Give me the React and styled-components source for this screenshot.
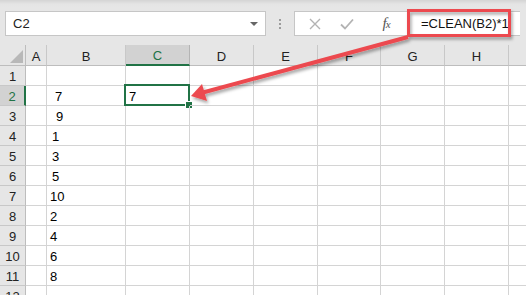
import React from "react";
import styled, { createGlobalStyle } from "styled-components";

const GREEN = "#217346";
const GRID = "#d4d4d4";
const columns = ["A", "B", "C", "D", "E", "F", "G", "H", "I"];
const widths = [21, 79, 64, 64, 64, 63, 64, 64, 64];
const values = [
  { v: "", indent: 0 },
  { v: "7", indent: 5 },
  { v: "9", indent: 6 },
  { v: "1", indent: 2 },
  { v: "3", indent: 2 },
  { v: "5", indent: 2 },
  { v: "10", indent: 0 },
  { v: "2", indent: 0 },
  { v: "4", indent: 0 },
  { v: "6", indent: 0 },
  { v: "8", indent: 0 },
  { v: "", indent: 0 },
];

const GlobalStyle = createGlobalStyle`
  body {
    margin: 0;
    background: #fff;
  }
`;

const Window = styled.div`
  position: relative;
  width: 526px;
  height: 295px;
  overflow: hidden;
  font-family: "Liberation Sans", Arial, sans-serif;
  color: #000;
`;

const TopBar = styled.div`
  height: 45px;
  box-sizing: border-box;
  display: flex;
  align-items: flex-start;
  padding: 11px 0 0 5px;
  background: linear-gradient(#d4d4d4 0px, #e4e4e4 4px, #e6e6e6 8px);
`;

const NameBox = styled.div`
  width: 261px;
  height: 25px;
  box-sizing: border-box;
  display: flex;
  align-items: center;
  justify-content: space-between;
  padding: 0 7px 0 7px;
  background: #fff;
  border: 1px solid #c6c6c6;
  font-size: 13px;
  color: #222;
`;

const Caret = styled.span`
  width: 0;
  height: 0;
  border-left: 4px solid transparent;
  border-right: 4px solid transparent;
  border-top: 4px solid #666;
`;

const Grip = styled.div`
  width: 28px;
  height: 25px;
  display: flex;
  flex-direction: column;
  align-items: center;
  justify-content: center;
  gap: 2px;
  & > span {
    width: 2px;
    height: 2px;
    background: #9c9c9c;
  }
`;

const FormulaArea = styled.div`
  width: 226px;
  height: 25px;
  box-sizing: border-box;
  display: flex;
  align-items: center;
  padding-left: 4px;
  background: #fff;
  border: 1px solid #c6c6c6;
  border-right: none;
`;

const Btn = styled.div`
  width: ${(p) => p.w}px;
  height: 100%;
  display: flex;
  align-items: center;
  justify-content: center;
`;

const Fx = styled.span`
  font-family: "Liberation Serif", "Times New Roman", serif;
  font-style: italic;
  font-size: 15px;
  color: #555;
  letter-spacing: -1px;
  & > small {
    font-size: 11px;
  }
`;

const FormulaText = styled.div`
  padding-left: 12px;
  font-size: 13px;
  color: #111;
`;

const Sheet = styled.div`
  display: grid;
  grid-template-columns: 26px ${widths.map((w) => `${w}px`).join(" ")};
  grid-auto-rows: 20px;
  grid-template-rows: 21px;
  width: max-content;
`;

const Corner = styled.div`
  position: relative;
  background: #e6e6e6;
  border-right: 1px solid #bdbdbd;
  border-bottom: 1px solid #bdbdbd;
  box-sizing: border-box;
  &::after {
    content: "";
    position: absolute;
    right: 2px;
    bottom: 2px;
    width: 0;
    height: 0;
    border-left: 13px solid transparent;
    border-bottom: 13px solid #b8b8b8;
  }
`;

const ColHeader = styled.div`
  box-sizing: border-box;
  display: flex;
  align-items: center;
  justify-content: center;
  padding-top: 2px;
  font-size: 13px;
  background: ${(p) => (p.selected ? "#d2d2d2" : "#e6e6e6")};
  color: ${(p) => (p.selected ? GREEN : "#222")};
  border-right: 1px solid ${(p) => (p.selected ? "#b4b4b4" : "#c8c8c8")};
  border-bottom: ${(p) => (p.selected ? `2px solid ${GREEN}` : "1px solid #bdbdbd")};
`;

const RowHeader = styled.div`
  box-sizing: border-box;
  display: flex;
  align-items: center;
  justify-content: center;
  padding-top: 2px;
  font-size: 13px;
  background: ${(p) => (p.selected ? "#d2d2d2" : "#e6e6e6")};
  color: ${(p) => (p.selected ? GREEN : "#222")};
  border-right: ${(p) => (p.selected ? `2px solid ${GREEN}` : "1px solid #bdbdbd")};
  border-bottom: 1px solid #c8c8c8;
`;

const Cell = styled.div`
  position: relative;
  box-sizing: border-box;
  display: flex;
  align-items: flex-end;
  padding-left: ${(p) => 3 + (p.indent || 0)}px;
  font-size: 13px;
  line-height: 16px;
  white-space: nowrap;
  border-right: 1px solid ${GRID};
  border-bottom: 1px solid ${GRID};
`;

const Selection = styled.div`
  position: absolute;
  left: -2px;
  top: -2px;
  right: -1px;
  bottom: -1px;
  border: 2px solid ${GREEN};
  pointer-events: none;
  &::after {
    content: "";
    position: absolute;
    right: -5px;
    bottom: -5px;
    width: 6px;
    height: 6px;
    background: ${GREEN};
    border: 1px solid #fff;
  }
`;

const Overlay = styled.svg`
  position: absolute;
  left: 0;
  top: 0;
  pointer-events: none;
`;

const Annotation = () => (
  <Overlay width="526" height="295" viewBox="0 0 526 295">
    <defs>
      <filter id="sh" x="-20%" y="-20%" width="140%" height="160%">
        <feDropShadow dx="1.5" dy="2.5" stdDeviation="1.5" floodColor="#000" floodOpacity="0.35" />
      </filter>
    </defs>
    <g filter="url(#sh)" fill="none" stroke="#ec4a4f">
      <rect x="408.5" y="10.5" width="101" height="25" strokeWidth="3" />
      <line x1="408" y1="37" x2="203" y2="92.5" strokeWidth="4" />
      <polygon points="191,96 207,101 202,84" fill="#ec4a4f" stroke="none" />
    </g>
  </Overlay>
);

const App = () => {
  return (
    <Window>
      <GlobalStyle />
      <TopBar>
        <NameBox>
          <span>C2</span>
          <Caret />
        </NameBox>
        <Grip>
          <span />
          <span />
          <span />
        </Grip>
        <FormulaArea>
          <Btn w={32}>
            <svg width="12" height="12" viewBox="0 0 12 12">
              <path d="M1 1L11 11M11 1L1 11" stroke="#b3b3b3" strokeWidth="1.4" />
            </svg>
          </Btn>
          <Btn w={32}>
            <svg width="14" height="12" viewBox="0 0 14 12">
              <path d="M1 6.5L5 10.5L13 1.5" fill="none" stroke="#b3b3b3" strokeWidth="1.8" />
            </svg>
          </Btn>
          <Btn w={46}>
            <Fx>
              f<small>x</small>
            </Fx>
          </Btn>
          <FormulaText>=CLEAN(B2)*1</FormulaText>
        </FormulaArea>
      </TopBar>
      <Sheet>
        <Corner />
        {columns.map((c) => (
          <ColHeader key={c} selected={c === "C"}>
            {c}
          </ColHeader>
        ))}
        {values.map((row, i) => (
          <React.Fragment key={i}>
            <RowHeader selected={i === 1}>{i + 1}</RowHeader>
            {columns.map((c) => {
              if (c === "B")
                return (
                  <Cell key={c} indent={row.indent}>
                    {row.v}
                  </Cell>
                );
              if (c === "C" && i === 1)
                return (
                  <Cell key={c}>
                    7
                    <Selection />
                  </Cell>
                );
              return <Cell key={c} />;
            })}
          </React.Fragment>
        ))}
      </Sheet>
      <Annotation />
    </Window>
  );
};

export default App;
